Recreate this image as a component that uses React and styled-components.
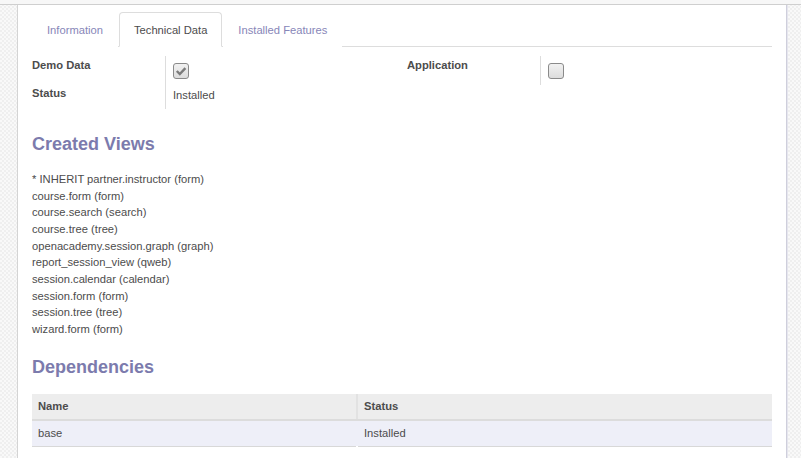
import React from 'react'
import styled, { createGlobalStyle } from 'styled-components'

const GlobalStyle = createGlobalStyle`
  html, body {
    margin: 0;
    padding: 0;
    overflow: hidden;
    font-family: "Liberation Sans", Arial, sans-serif;
    font-size: 11.2px;
    color: #4c4c4c;
  }
`

const Page = styled.div`
  width: 801px;
  height: 458px;
  display: flex;
  flex-direction: column;
  background-color: #f6f6f6;
  background-image: repeating-conic-gradient(#efefef 0% 25%, #f9f9f9 0% 50%);
  background-size: 4px 4px;
`

const TopStrip = styled.div`
  height: 4px;
  flex: none;
  background: #f7f7f7;
  border-bottom: 1px solid #cfcfcf;
`

const Main = styled.div`
  flex: 1;
  display: flex;
  min-height: 0;
`

const Sheet = styled.div`
  margin-left: 17px;
  width: 740px;
  padding: 0 14px;
  background: #fff;
  border-left: 1px solid #d4d4d4;
  border-right: 1px solid #cfcfdc;
  box-shadow: 1px 0 0 #e6e6ee;
`

const Tabs = styled.ul`
  list-style: none;
  margin: 7px 0 0;
  padding: 0;
  display: flex;
  border-bottom: 1px solid #ddd;
`

const Tab = styled.li`
  height: 35px;
  padding: 0 14px;
  margin: 0 1px -1px 0;
  display: flex;
  align-items: center;
  box-sizing: border-box;
  border: 1px solid ${p => (p.$active ? '#ddd' : 'transparent')};
  border-bottom-color: ${p => (p.$active ? '#fff' : 'transparent')};
  border-radius: 4px 4px 0 0;
  background: #fff;
  color: ${p => (p.$active ? '#4c4c4c' : '#8786b8')};
`

const FormGroups = styled.div`
  display: grid;
  grid-template-columns: 375px 1fr;
  padding-top: 9px;
`

const Group = styled.div`
  display: grid;
  grid-template-columns: 134px 1fr;
  align-content: start;
`

const Label = styled.div`
  font-weight: bold;
  line-height: 16px;
  height: ${p => p.$h}px;
  padding-top: 1px;
  box-sizing: border-box;
  border-right: 1px solid #ddd;
`

const Value = styled.div`
  padding-left: 7px;
  height: ${p => p.$h}px;
  line-height: 16px;
  padding-top: ${p => p.$pt || 0}px;
  box-sizing: border-box;
`

const Box = styled.span`
  display: inline-block;
  width: 16px;
  height: 16px;
  margin-top: 6px;
  box-sizing: border-box;
  border: 1px solid #8a8a8a;
  border-radius: 3px;
  background: linear-gradient(#f1f1f1, #dcdcdc);
  position: relative;

  svg {
    position: absolute;
    left: 1px;
    top: 1px;
  }
`

const Heading = styled.h2`
  margin: 24px 0 0;
  font-size: 18px;
  line-height: 22px;
  font-weight: bold;
  color: #7c7bad;
`

const ViewList = styled.ul`
  list-style: none;
  margin: 16px 0 0;
  padding: 0;
  line-height: 16.67px;

  & + ${Heading} {
    margin-top: 18px;
  }
`

const Table = styled.table`
  width: 100%;
  margin-top: 16px;
  border-collapse: collapse;
`

const Th = styled.th`
  background: #ededed;
  height: 25px;
  padding: 0 6px;
  text-align: left;
  font-weight: bold;
  border-bottom: 2px solid #dcdcdc;
  border-left: ${p => (p.$first ? 'none' : '2px solid #e2e2e2')};
  width: ${p => (p.$first ? '312px' : 'auto')};
`

const Td = styled.td`
  background: #eeeff8;
  height: 25px;
  padding: 0 6px;
  border-bottom: 1px solid #d8d8d8;
  border-left: ${p => (p.$first ? 'none' : '2px solid transparent')};
`

const Checkbox = ({ checked }) => (
  <Box>
    {checked && (
      <svg width="12" height="12" viewBox="0 0 12 12">
        <path d="M1.8 6 L4.8 9 L10.4 3.2" fill="none" stroke="#7b7b7b" strokeWidth="2.4" />
      </svg>
    )}
  </Box>
)

const views = [
  '* INHERIT partner.instructor (form)',
  'course.form (form)',
  'course.search (search)',
  'course.tree (tree)',
  'openacademy.session.graph (graph)',
  'report_session_view (qweb)',
  'session.calendar (calendar)',
  'session.form (form)',
  'session.tree (tree)',
  'wizard.form (form)',
]

export default function App() {
  return (
    <Page>
      <GlobalStyle />
      <TopStrip />
      <Main>
        <Sheet>
          <Tabs>
            <Tab>Information</Tab>
            <Tab $active>Technical Data</Tab>
            <Tab>Installed Features</Tab>
          </Tabs>

          <FormGroups>
            <Group>
              <Label $h={28}>Demo Data</Label>
              <Value $h={28} $pt={1}><Checkbox checked /></Value>
              <Label $h={25}>Status</Label>
              <Value $h={25} $pt={3}>Installed</Value>
            </Group>
            <Group>
              <Label $h={29}>Application</Label>
              <Value $h={29} $pt={1}><Checkbox /></Value>
            </Group>
          </FormGroups>

          <Heading>Created Views</Heading>
          <ViewList>
            {views.map(v => <li key={v}>{v}</li>)}
          </ViewList>

          <Heading>Dependencies</Heading>
          <Table>
            <thead>
              <tr>
                <Th $first>Name</Th>
                <Th>Status</Th>
              </tr>
            </thead>
            <tbody>
              <tr>
                <Td $first>base</Td>
                <Td>Installed</Td>
              </tr>
            </tbody>
          </Table>
        </Sheet>
      </Main>
    </Page>
  )
}
